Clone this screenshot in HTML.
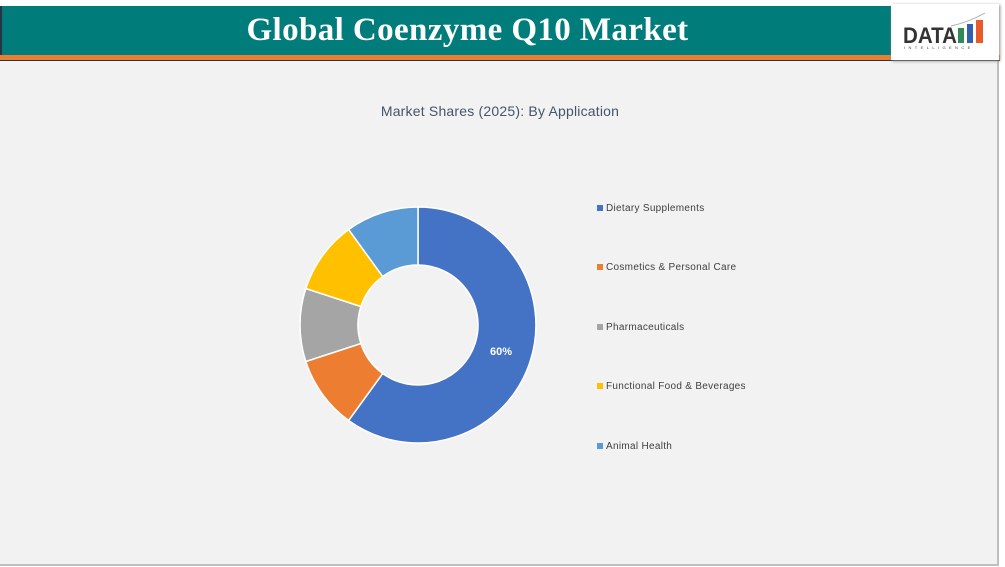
<!DOCTYPE html>
<html><head><meta charset="utf-8"><style>
body{margin:0;width:1005px;height:567px;background:#fff;position:relative;overflow:hidden;font-family:"Liberation Sans",sans-serif}
.panel{position:absolute;left:0;top:61px;width:997px;height:503px;background:#f2f2f2;border-right:2px solid #bfbfbf;border-bottom:2px solid #bfbfbf}
.hdr{position:absolute;left:0;top:6px;width:891px;height:49px;background:#007c7b;border-left:2px solid #263545;box-sizing:border-box}
.orange{position:absolute;left:0;top:55px;width:1000px;height:5px;background:#ed7d31;border-bottom:1px solid #263545}
.title{position:absolute;left:0;top:6px;width:935px;text-align:center;color:#fff;font-family:"Liberation Serif",serif;font-weight:bold;font-size:33px;line-height:49px;letter-spacing:0.4px}
.logo{position:absolute;left:891px;top:4px;width:108px;height:56px;background:#fff;box-shadow:1px 1px 3px #888}
.ct{position:absolute;left:0;width:1000px;top:103px;text-align:center;font-size:14px;color:#44546a;letter-spacing:0.2px}
.lg{position:absolute;left:597px;font-size:10px;color:#404040;letter-spacing:.3px}
.lg i{display:inline-block;width:6px;height:6px;margin-right:3px;vertical-align:0}
</style></head><body>
<div class="panel"></div>
<div class="hdr"></div>
<div class="orange"></div>
<div class="title">Global Coenzyme Q10 Market</div>
<div class="logo">
<svg width="108" height="56">
<text x="12" y="39" font-family="Liberation Sans" font-weight="bold" font-size="22" fill="#333" textLength="54" lengthAdjust="spacingAndGlyphs">DATA</text>
<rect x="67" y="24" width="6" height="15" fill="#2e8b57"/>
<rect x="76" y="20" width="6" height="19" fill="#3060b0"/>
<rect x="85" y="16" width="7" height="23" fill="#e85a2a"/>
<path d="M60 22 Q78 18 94 9" stroke="#aaa" fill="none" stroke-width="1"/>
<text x="13" y="45" font-size="4" fill="#444" letter-spacing="3.4">INTELLIGENCE</text>
</svg></div>
<div class="ct">Market Shares (2025): By Application</div>
<svg style="position:absolute;left:0;top:0" width="1005" height="567">
<g stroke="#fff" stroke-width="1.5">
<path d="M418 207 A118 118 0 1 1 348.6 420.5 L382.7 373.5 A60 60 0 1 0 418 265 Z" fill="#4472c4"/>
<path d="M348.6 420.5 A118 118 0 0 1 305.8 361.5 L360.9 343.5 A60 60 0 0 0 382.7 373.5 Z" fill="#ed7d31"/>
<path d="M305.8 361.5 A118 118 0 0 1 305.8 288.5 L360.9 306.5 A60 60 0 0 0 360.9 343.5 Z" fill="#a5a5a5"/>
<path d="M305.8 288.5 A118 118 0 0 1 348.6 229.5 L382.7 276.5 A60 60 0 0 0 360.9 306.5 Z" fill="#ffc000"/>
<path d="M348.6 229.5 A118 118 0 0 1 418 207 L418 265 A60 60 0 0 0 382.7 276.5 Z" fill="#5b9bd5"/>
</g>
<text x="501" y="355" fill="#fff" font-size="11" font-weight="bold" text-anchor="middle">60%</text>
</svg>
<div class="lg" style="top:203px"><i style="background:#4472c4"></i>Dietary Supplements</div>
<div class="lg" style="top:262px"><i style="background:#ed7d31"></i>Cosmetics &amp; Personal Care</div>
<div class="lg" style="top:322px"><i style="background:#a5a5a5"></i>Pharmaceuticals</div>
<div class="lg" style="top:381px"><i style="background:#ffc000"></i>Functional Food &amp; Beverages</div>
<div class="lg" style="top:441px"><i style="background:#5b9bd5"></i>Animal Health</div>
</body></html>
